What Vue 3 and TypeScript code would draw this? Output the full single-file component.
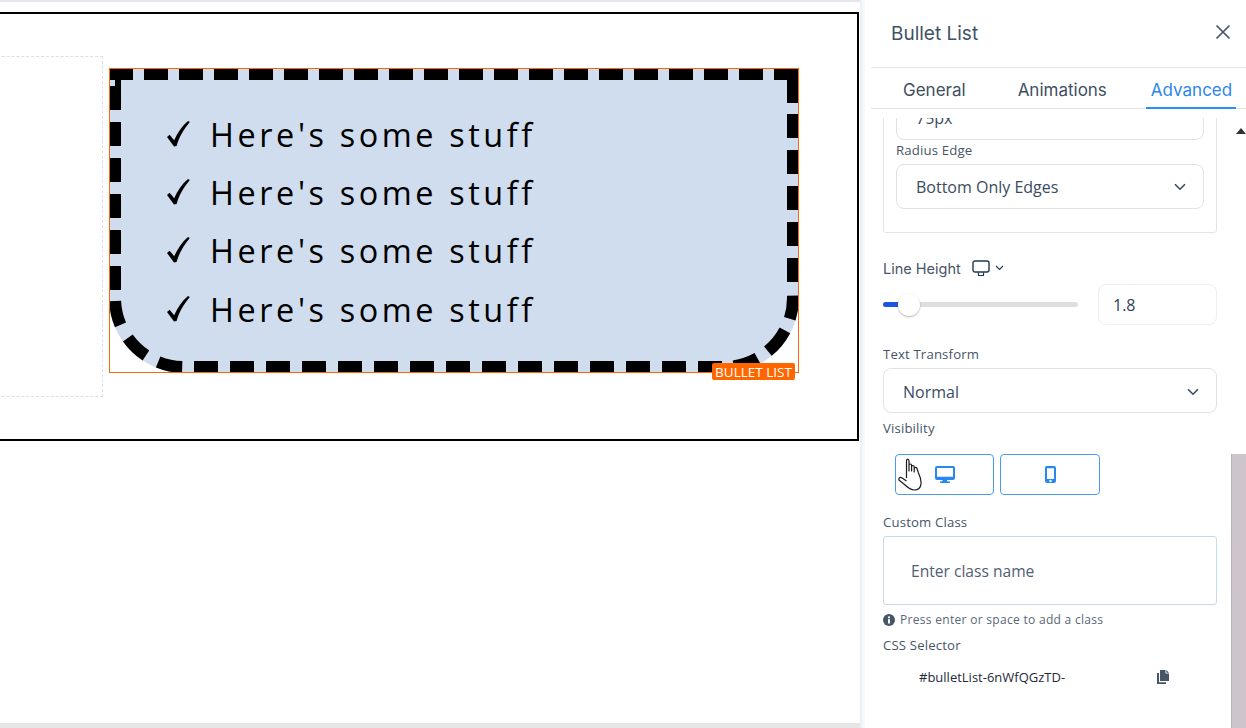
<script setup lang="ts">
const rows: string[] = ["Here's some stuff", "Here's some stuff", "Here's some stuff", "Here's some stuff"]

// The dashes of the selected block's 12px border, in the block's own coordinates.
const arc = (cx: number, cy: number, from: number, to: number, mirror: boolean): string => {
  const r = 69
  const pt = (deg: number): string => {
    const a = (deg * Math.PI) / 180
    const dx = r * Math.cos(a)
    return `${(mirror ? cx - dx : cx + dx).toFixed(2)} ${(cy + r * Math.sin(a)).toFixed(2)}`
  }
  return `M${pt(from)}A${r} ${r} 0 0 ${mirror ? 0 : 1} ${pt(to)}`
}

const parts: string[] = []
for (let k = 0; k < 19; k++) parts.push(`M${35 * k} 6h24`)
parts.push('M665 6H684V35')
for (let k = 0; k < 5; k++) parts.push(`M684 ${46 + 36 * k}v24`)
for (let k = 0; k < 15; k++) parts.push(`M${85 + 36 * k} 299h24`)
parts.push('M6 0V42')
for (let k = 0; k < 5; k++) parts.push(`M6 ${54 + 36 * k}v24`)
const rightArc: [number, number][] = [[-2, 17.5], [28, 50.5], [61, 82]]
const leftArc: [number, number][] = [[2.5, 23], [35.5, 56.5], [68, 88.5]]
rightArc.forEach(([a, b]) => parts.push(arc(615, 230, a, b, false)))
leftArc.forEach(([a, b]) => parts.push(arc(75, 230, a, b, true)))
const dashes: string = parts.join('')
</script>

<template>
  <div class="stage">
    <main class="canvas">
      <section class="band">
        <div class="ghost"></div>
        <div class="selected">
          <ul class="bullets">
            <li v-for="(row, i) in rows" :key="i">
              <svg class="check" viewBox="0 0 23 26" width="23" height="26"><path d="M0 16 L2.600 13.800 L7.200 19.200 C10.500 12 15 5 21 0 L22.800 1 C17 8 12 16 9.600 25 L7 25.500 Z" fill="#000"/></svg>
              <span>{{ row }}</span>
            </li>
          </ul>
          <svg class="dashes" width="690" height="305" viewBox="0 0 690 305"><path :d="dashes" fill="none" stroke="#000" stroke-width="12"/></svg>
          <i class="frame"></i>
          <i class="handle"></i>
          <span class="tag">BULLET LIST</span>
        </div>
      </section>
    </main>

    <aside class="side">
      <header class="head">
        <span class="title">Bullet List</span>
        <svg width="16" height="16" viewBox="0 0 16 16" class="close"><path d="M1.500 1.500 14.500 14.500M14.500 1.500 1.500 14.500" stroke="#45566a" stroke-width="1.700" fill="none"/></svg>
      </header>
      <nav class="tabs">
        <span class="tab t1">General</span>
        <span class="tab t2">Animations</span>
        <span class="tab t3">Advanced</span>
      </nav>
      <div class="scroll">
        <div class="card">
          <div class="field small"><span>75px</span><span class="tick">⌃</span></div>
          <label class="lab rad">Radius Edge</label>
          <div class="field"><span>Bottom Only Edges</span><svg class="chev" width="12" height="8" viewBox="0 0 12 8"><path d="M1 1.200 6 6.200 11 1.200" stroke="#3a4a5c" stroke-width="1.600" fill="none"/></svg></div>
        </div>

        <div class="lh-row">
          <span class="lab2">Line Height</span>
          <svg width="18" height="17" viewBox="0 0 18 17"><rect x="1" y="1" width="16" height="11" rx="2" stroke="#22384d" stroke-width="1.400" fill="none"/><path d="M6.500 12.500v3h5v-3" stroke="#22384d" stroke-width="1.200" fill="none"/></svg>
          <svg width="9" height="6" viewBox="0 0 9 6"><path d="M1 1 4.500 4.500 8 1" stroke="#22384d" stroke-width="1.100" fill="none"/></svg>
        </div>
        <div class="slider-row">
          <div class="slider"><i class="fill"></i><i class="thumb"></i></div>
          <div class="num">1.8</div>
        </div>

        <label class="lab tt">Text Transform</label>
        <div class="field wide"><span>Normal</span><svg class="chev" width="12" height="8" viewBox="0 0 12 8"><path d="M1 1.200 6 6.200 11 1.200" stroke="#3a4a5c" stroke-width="1.600" fill="none"/></svg></div>

        <label class="lab vis">Visibility</label>
        <div class="vis-row">
          <div class="vbtn one">
            <svg width="20" height="17" viewBox="0 0 20 17"><path fill="#2688f0" d="M2 0h16a2 2 0 0 1 2 2v10a2 2 0 0 1-2 2h-6l.5 1.600H15V17H5v-1.400h1.500L8 14H2a2 2 0 0 1-2-2V2a2 2 0 0 1 2-2Zm0 2v8.800h16V2Z"/></svg>
          </div>
          <div class="vbtn two">
            <svg width="11" height="17" viewBox="0 0 11 17"><path fill="#2688f0" fill-rule="evenodd" d="M2 0h7a2 2 0 0 1 2 2v13a2 2 0 0 1-2 2H2a2 2 0 0 1-2-2V2a2 2 0 0 1 2-2Zm0 2.200v10.800h7V2.200ZM5.500 13.800a1.200 1.200 0 1 0 0 2.400 1.200 1.200 0 0 0 0-2.400Z"/></svg>
          </div>
          <svg class="hand" width="25" height="33" viewBox="0 0 25 33"><path d="M8.500 20 V3 C8.500 .4 11 .4 11 3 V13 V7.500 C11 5.500 13.600 5.500 13.600 7.500 V13 V9 C13.600 7 16.200 7 16.200 9 V14 V10.800 C16.200 9 19 9 19 10.800 L20.500 15 C22.800 20 23.500 24 22.800 27 C22 30.500 19.500 32 16.500 32 C12 32 9 29 6.500 26.500 L1.500 22.500 C0 21 1.500 18.500 3.800 19.800 L8.500 23" fill="#fff" stroke="#1b1b1f" stroke-width="1.200" stroke-linejoin="round"/></svg>
        </div>

        <label class="lab cc">Custom Class</label>
        <div class="cls-input">Enter class name</div>
        <div class="hint">
          <svg width="12" height="12" viewBox="0 0 12 12"><circle cx="6" cy="6" r="6" fill="#475569"/><rect x="5" y="5.200" width="2" height="4.300" fill="#fff"/><circle cx="6" cy="3.300" r="1.100" fill="#fff"/></svg>
          <span>Press enter or space to add a class</span>
        </div>
        <label class="lab css">CSS Selector</label>
        <div class="selector">
          <span>#bulletList-6nWfQGzTD-</span>
          <svg width="12" height="14" viewBox="0 0 12 14"><path fill="#475569" d="M3 0h5.500v3.500H12V11H3Z"/><path fill="#475569" d="M9.300 0 12 2.800H9.300ZM0 3h2v9.300h7V14H0Z"/></svg>
        </div>
      </div>
      <div class="bar-arrow"></div>
      <div class="bar"></div>
    </aside>
  </div>
</template>

<style>
html, body { margin: 0; background: #fff; }
</style>

<style scoped>
.stage { display: flex; width: 1246px; height: 728px; overflow: hidden; background: #fff; font-family: "Open Sans", sans-serif; }
.canvas { flex: 0 0 860px; height: 723px; box-sizing: border-box; padding-top: 12px; overflow: hidden; background: #fff; box-shadow: 0 5px 0 #e6e6e6; position: relative; }
.canvas::before { content: ""; position: absolute; left: 0; right: 0; top: 0; height: 2px; background: #e6e6ee; }
.band { box-sizing: border-box; height: 429px; width: 879px; margin-left: -20px; border: 2px solid #000; display: flex; gap: 6px; padding-top: 42px; }
.ghost { flex: none; width: 121px; height: 341px; box-sizing: border-box; border: 1px dashed #dcdde6; }
.selected { flex: none; position: relative; width: 690px; height: 305px; margin-top: 12px; }
.bullets { margin: 0; list-style: none; box-sizing: border-box; height: 305px; padding: 24.500px 0 0 46px; background: #cfddee; border: 12px solid transparent; border-radius: 0 0 75px 75px; }
.bullets li { display: flex; align-items: center; height: 58.3px; font-size: 32.4px; letter-spacing: 3.6px; color: #000; }
.check { flex: none; margin-right: 20px; }
.dashes { position: absolute; left: 0; top: 0; }
.frame { position: absolute; inset: 0; border: 1px solid #ff6600; }
.handle { position: absolute; left: 1px; top: 12px; width: 5px; height: 6px; background: #cfddee; }
.tag { position: absolute; right: 4px; bottom: -7px; height: 17px; width: 83px; background: #ff6600; color: #fff; font: 13.5px/18px "Open Sans", sans-serif; text-align: center; border-radius: 2px; white-space: nowrap; }

.side { flex: 1; position: relative; box-sizing: border-box; height: 728px; padding-left: 11px; background: linear-gradient(90deg, #efefef 0 2px, #f2faff 2px 5px, #fff 5px); overflow: hidden; }
.head { box-sizing: border-box; height: 68px; display: flex; align-items: center; justify-content: space-between; padding: 0 15px 0 20px; border-bottom: 1px solid #e2e5ea; }
.title { font: 400 19px "Inter", sans-serif; color: #3f5266; }
.close { margin-bottom: 4px; }
.tabs { box-sizing: border-box; height: 41px; padding-top: 3px; display: flex; align-items: center; border-bottom: 1px solid #dfe3e8; font: 400 17px/22px "Inter", sans-serif; color: #3e4f62; position: relative; }
.t1 { margin-left: 32px; }
.t2 { margin-left: 52px; }
.t3 { margin-left: 44px; color: #2a85ee; }
.t3::after { content: ""; position: absolute; left: 275px; width: 90px; bottom: -1px; height: 2px; background: #2b8df5; }
.scroll { height: 610px; margin-top: 9px; padding: 0 29px 0 12px; overflow: hidden; color: #475569; }
.card { box-sizing: border-box; margin-top: -24px; height: 139px; border: 1px solid #e2e5ea; border-radius: 3px; padding: 0 12px; }
.field { box-sizing: border-box; height: 45px; border: 1px solid #dfe2e8; border-radius: 8px; display: flex; align-items: center; justify-content: space-between; padding: 0 17px 0 19px; font: 16px "Open Sans", sans-serif; color: #3a4c60; background: #fff; }
.tick { font-size: 11px; color: #555; }
.lab { display: block; font: 500 13.2px/18px "Open Sans", sans-serif; color: #475569; letter-spacing: .15px; }
.rad { margin-top: 1px; margin-bottom: 5px; }
.lh-row { display: flex; align-items: center; gap: 5px; height: 20px; margin-top: 25px; }
.lab2 { font: 14.5px "Inter", sans-serif; color: #475569; margin-right: 6px; }
.slider-row { display: flex; align-items: center; justify-content: space-between; margin-top: 6px; }
.slider { position: relative; width: 195px; height: 5px; border-radius: 3px; background: #dedddf; }
.fill { position: absolute; left: 0; top: 0; width: 16px; height: 5px; background: #1d55e0; border-radius: 3px 0 0 3px; }
.thumb { position: absolute; left: 15px; top: -8px; width: 22px; height: 22px; border-radius: 50%; background: #fff; box-shadow: 0 1px 2px rgba(0,0,0,.3); }
.num { box-sizing: border-box; width: 119px; height: 41px; border: 1px solid #eceef1; border-radius: 8px; padding-left: 14px; font: 16px/41px "Open Sans", sans-serif; color: #334155; }
.tt { margin-top: 20px; margin-bottom: 5px; }
.wide { padding-right: 17px; padding-top: 2px; }
.vis { margin-top: 6px; }
.vis-row { position: relative; display: flex; gap: 6px; margin: 17px 0 0 12px; }
.vbtn { box-sizing: border-box; height: 41px; border: 1px solid #4a9bf0; border-radius: 4px; display: flex; align-items: center; justify-content: center; }
.one { width: 99px; }
.two { width: 100px; }
.hand { position: absolute; left: 3px; top: 4px; }
.cc { margin-top: 18px; margin-bottom: 5px; }
.cls-input { box-sizing: border-box; height: 69px; border: 1px solid #c5dbec; border-radius: 3px; padding-left: 27px; font: 15.6px/68px "Open Sans", sans-serif; color: #526074; }
.hint { display: flex; align-items: center; gap: 5px; margin-top: 7px; font: 12px/16px "Open Sans", sans-serif; color: #5a6778; letter-spacing: .3px; }
.css { margin-top: 8px; }
.selector { display: flex; align-items: center; justify-content: space-between; margin-top: 13px; padding: 0 48px 0 36px; font: 13px/20px "Open Sans", sans-serif; color: #1e293b; }
.bar { position: absolute; right: 0; top: 454px; bottom: 0; width: 14px; background: #cdc4cc; border-left: 1px solid #b9b2b9; }
.bar-arrow { position: absolute; right: 0; top: 128px; width: 0; height: 0; border: 5px solid transparent; border-top: 0; border-bottom: 6px solid #333; }
</style>
